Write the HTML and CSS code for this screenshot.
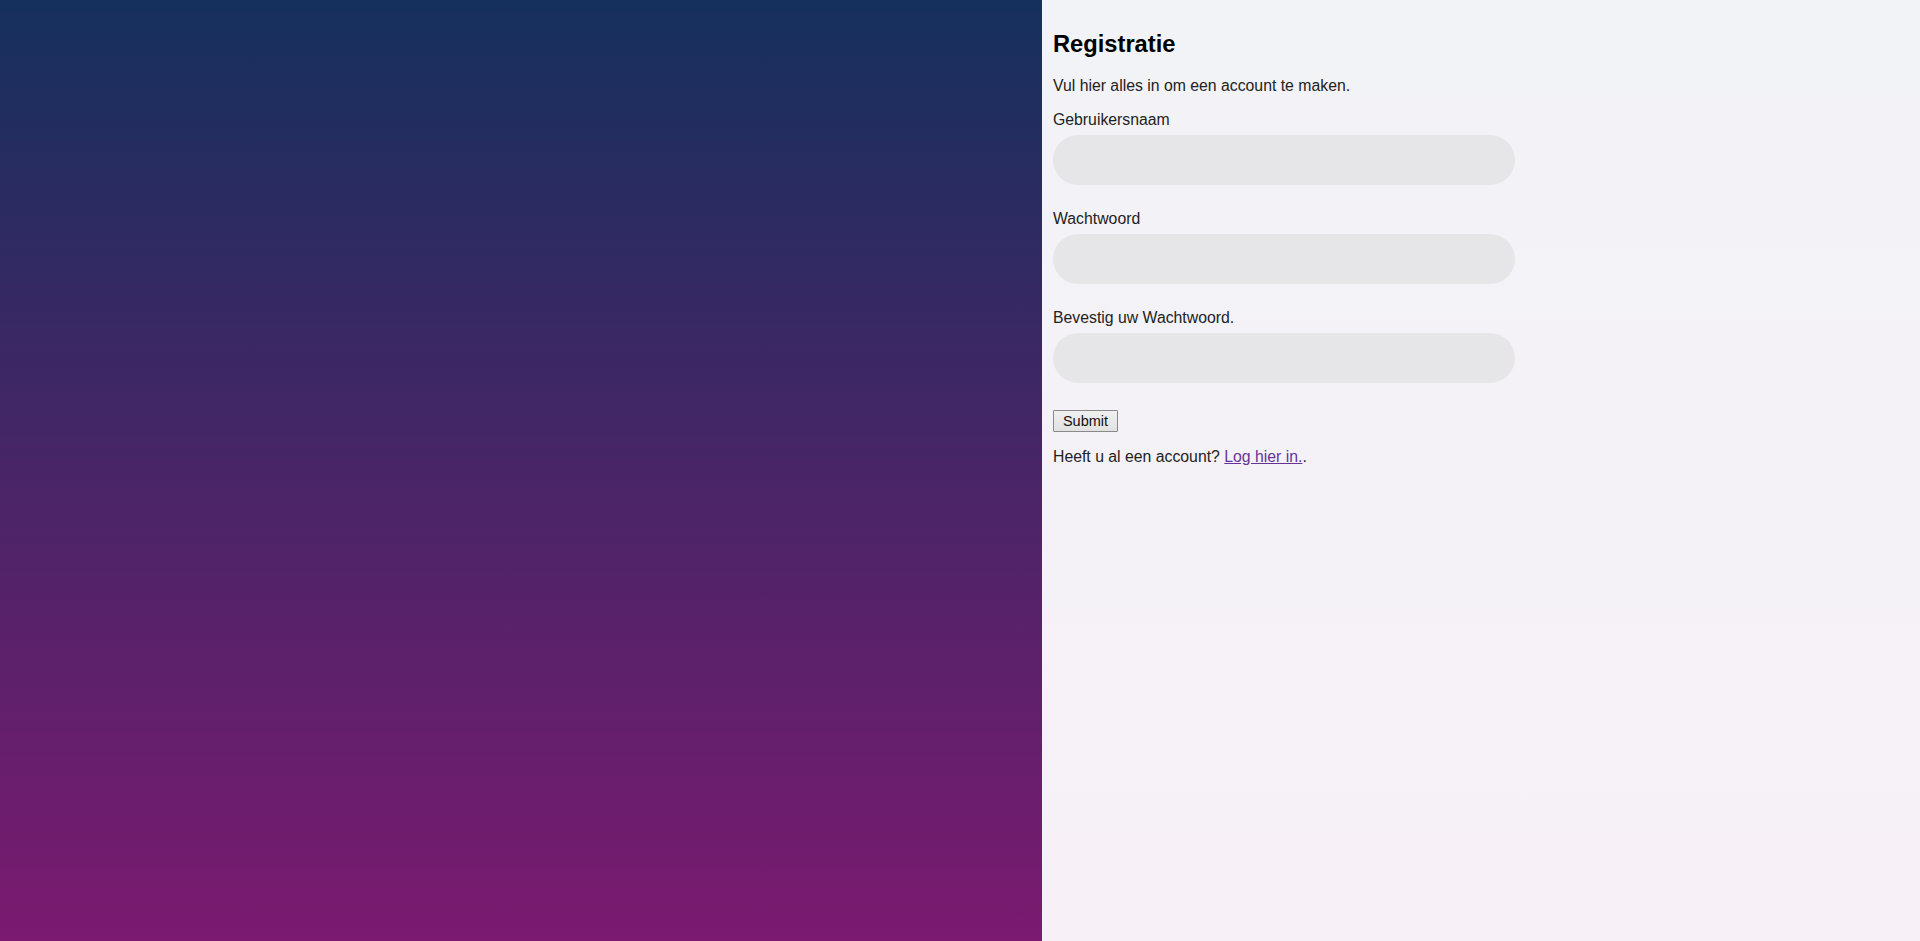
FILE: index.html
```html
<!DOCTYPE html>
<html lang="nl">
<head>
<meta charset="utf-8">
<title>Registratie</title>
<link rel="stylesheet" href="styles.css">
</head>
<body>
<div class="page">
  <div class="side"></div>
  <main class="panel">
    <h2 class="title">Registratie</h2>
    <p class="intro">Vul hier alles in om een account te maken.</p>
    <form class="form">
      <label class="label" for="u">Gebruikersnaam</label>
      <input class="field" id="u" type="text">
      <label class="label" for="p">Wachtwoord</label>
      <input class="field" id="p" type="password">
      <label class="label" for="c">Bevestig uw Wachtwoord.</label>
      <input class="field" id="c" type="password">
      <div class="actions"><button class="submit" type="button">Submit</button></div>
    </form>
    <p class="login">Heeft u al een account? <a class="link" href="#">Log hier in.</a>.</p>
  </main>
</div>
</body>
</html>
```
FILE: styles.css
```css
html, body {
  margin: 0;
  padding: 0;
  height: 100%;
}
body {
  font-family: "Liberation Sans", Arial, sans-serif;
  font-size: 15.8px;
  color: #222;
}
.page {
  display: flex;
  height: 941px;
}
.side {
  width: 1042px;
  flex: none;
  background: linear-gradient(to bottom, #15305d, #7b1a70);
}
.panel {
  flex: 1;
  padding: 10px 0 0 11px;
  background: linear-gradient(to bottom, #f2f3f7, #f7f1f7);
}
.title {
  margin: 20px 0 0;
  font-size: 23.7px;
  line-height: 28px;
  font-weight: bold;
  color: #000;
}
.intro {
  margin: 19px 0 0;
  line-height: 18px;
}
.form {
  display: flex;
  flex-direction: column;
  align-items: flex-start;
  margin-top: 16px;
}
.label {
  line-height: 18px;
  margin-bottom: 6px;
}
.field {
  box-sizing: border-box;
  width: 462px;
  height: 50px;
  border: none;
  border-radius: 25px;
  background: #e6e6e8;
  margin: 0 0 25px;
  padding: 0 20px;
  font: inherit;
  outline: none;
}
.actions {
  margin-top: 2px;
}
.submit {
  box-sizing: border-box;
  width: 65px;
  height: 22px;
  padding: 0;
  font-family: "Liberation Sans", Arial, sans-serif;
  font-size: 14.5px;
  color: #111;
  border: 1px solid #8a8a8a;
  border-radius: 1px;
  background: linear-gradient(to bottom, #f0f0f0, #e1e1e1);
}
.login {
  margin: 16px 0 0;
  line-height: 18px;
}
.link {
  color: #663399;
}
```
